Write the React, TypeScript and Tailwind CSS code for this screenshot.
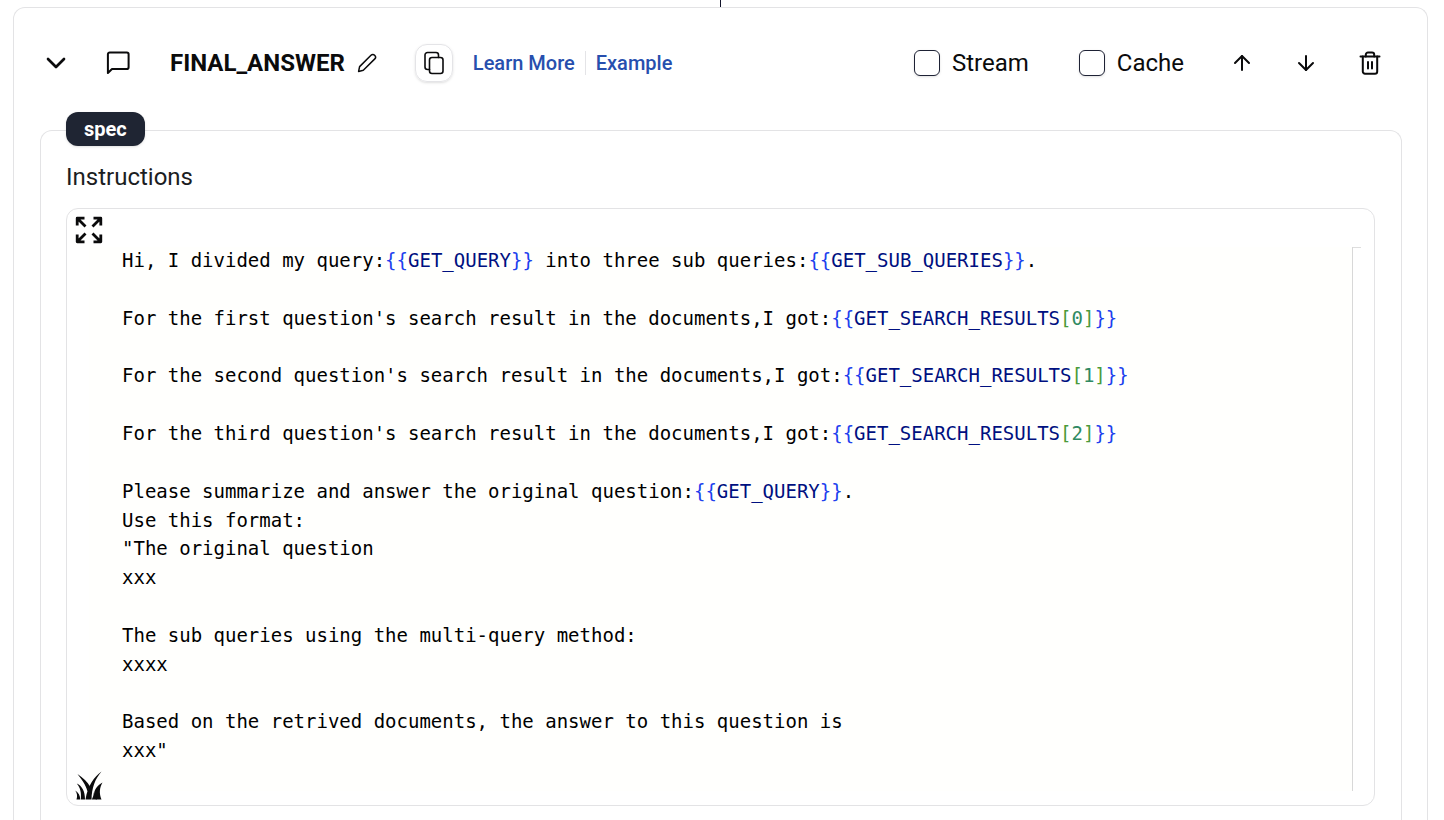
import React from "react";
import { ArrowDown, ArrowUp, ChevronDown } from "lucide-react";

type Token = { text: string; kind?: "brace" | "name" | "index" | "number" };

const ref = (name: string, index?: string): Token[] => [
  { text: "{{", kind: "brace" },
  { text: name, kind: "name" },
  ...(index === undefined
    ? []
    : ([
        { text: "[", kind: "index" },
        { text: index, kind: "number" },
        { text: "]", kind: "index" },
      ] as Token[])),
  { text: "}}", kind: "brace" },
];

const t = (text: string): Token => ({ text });

const lines: Token[][] = [
  [t("Hi, I divided my query:"), ...ref("GET_QUERY"), t(" into three sub queries:"), ...ref("GET_SUB_QUERIES"), t(".")],
  [],
  [t("For the first question's search result in the documents,I got:"), ...ref("GET_SEARCH_RESULTS", "0")],
  [],
  [t("For the second question's search result in the documents,I got:"), ...ref("GET_SEARCH_RESULTS", "1")],
  [],
  [t("For the third question's search result in the documents,I got:"), ...ref("GET_SEARCH_RESULTS", "2")],
  [],
  [t("Please summarize and answer the original question:"), ...ref("GET_QUERY"), t(".")],
  [t("Use this format:")],
  [t('"The original question')],
  [t("xxx")],
  [],
  [t("The sub queries using the multi-query method:")],
  [t("xxxx")],
  [],
  [t("Based on the retrived documents, the answer to this question is")],
  [t('xxx"')],
];

const tokenColor = {
  brace: "text-[#2040ee]",
  name: "text-[#001080]",
  index: "text-[#4a9a3a]",
  number: "text-[#2f8a62]",
};

function MessageIcon() {
  return (
    <svg viewBox="0 0 24 24" className="size-6" fill="none" stroke="currentColor" strokeWidth="2" strokeLinejoin="round" aria-hidden="true">
      <path d="M1.9 22V3.200A1.800 1.800 0 0 1 3.700 1.400H20.800A1.800 1.800 0 0 1 22.600 3.200V16.200A1.800 1.800 0 0 1 20.800 18H6Z" />
    </svg>
  );
}

function PencilIcon() {
  return (
    <svg viewBox="0 0 20 20" className="size-5" fill="none" stroke="currentColor" strokeWidth="1.5" strokeLinejoin="round" aria-hidden="true">
      <path d="M1.6 18.400 2.600 13.600 14 2.200C15 1.200 16.600 1.200 17.600 2.200 18.800 3.400 18.800 4.900 17.800 5.900L6.300 17.200Z" />
    </svg>
  );
}

function CopyIcon() {
  return (
    <svg viewBox="0 0 24 24" className="size-6" fill="none" stroke="currentColor" strokeWidth="1.6" strokeLinejoin="round" strokeLinecap="round" aria-hidden="true">
      <rect x="7.500" y="6.500" width="13.500" height="16" rx="2.500" />
      <path d="M7.500 18.500H5.500A2.500 2.500 0 0 1 3 16V4A2.500 2.500 0 0 1 5.500 1.500H14A2.500 2.500 0 0 1 16.500 4V6.500" />
    </svg>
  );
}

function TrashIcon() {
  return (
    <svg viewBox="0 0 24 26" className="h-6.5 w-6" fill="none" stroke="currentColor" strokeWidth="2" strokeLinecap="round" strokeLinejoin="round" aria-hidden="true">
      <path d="M2.500 6.500H21.500" />
      <path d="M7.800 6.500V4.700A2.200 2.200 0 0 1 10 2.500H14A2.200 2.200 0 0 1 16.200 4.700V6.500" />
      <path d="M4.800 6.500V21.500A2.200 2.200 0 0 0 7 23.700H17A2.200 2.200 0 0 0 19.200 21.500V6.500" />
      <path d="M10 12V18.500M14 12V18.500" />
    </svg>
  );
}

function ExpandIcon() {
  return (
    <svg viewBox="0 0 28 28" className="size-7" fill="none" stroke="currentColor" strokeWidth="2.8" strokeLinejoin="round" aria-hidden="true">
      <path d="M9.500 2.200H2.200V9.500M2.500 2.500 10.500 10.500" />
      <path d="M18.500 2.200H25.800V9.500M25.500 2.500 17.500 10.500" />
      <path d="M9.500 25.800H2.200V18.500M2.500 25.500 10.500 17.500" />
      <path d="M18.500 25.800H25.800V18.500M25.500 25.500 17.500 17.500" />
    </svg>
  );
}

function GrassIcon() {
  return (
    <svg viewBox="0 0 28 30" className="h-7.5 w-7" fill="currentColor" aria-hidden="true">
      <path d="M26.500 .5C19 6 13 14 10.500 28.500H16.500C16.800 17 20 8 26.500 .5Z" />
      <path d="M2.500 3C8 7 12.800 11 15 15.500L12.500 20.500C10.500 13 7 9 2.500 3Z" />
      <path d="M1.800 12.500C7 15 10 20 10 28.500H5.800C6.500 22 5.500 17 1.800 12.500Z" />
      <path d="M27.500 11.500C22 14.500 19 19 19.200 23L20.800 28.500H26.500C24 22 24.500 17 27.500 11.500Z" />
      <path d="M.2 19.500C3.500 21.500 5.200 24.500 5.200 28.500H1.500C2.600 25 2.200 22 .2 19.500Z" />
      <path d="M18.800 21.500C20.800 24 21.800 26 21.800 28.500H16.800C18 26 18.600 24.500 18.800 21.500Z" />
    </svg>
  );
}

function CheckField({ id, label }: { id: string; label: string }) {
  return (
    <label htmlFor={id} className="flex items-center gap-3">
      <input
        id={id}
        type="checkbox"
        className="size-[26px] appearance-none rounded-md border border-[#1e2235] bg-white shadow-sm checked:bg-[#1f2533]"
      />
      <span className="text-[24px] leading-8 font-normal">{label}</span>
    </label>
  );
}

export default function App() {
  return (
    <main className="min-h-screen bg-white pr-4 pl-[13px] font-['Roboto',sans-serif] text-[#0b0b0c]">
      <div className="mx-auto h-[7px] w-px bg-[#12142a]" />
      <section className="rounded-t-xl border border-b-0 border-[#e3e3e5] pr-[25px] pl-[26px]">
        <header className="flex h-[109px] items-center justify-between">
          <div className="flex items-center">
            <button type="button" aria-label="Collapse" className="flex size-8 items-center justify-center">
              <ChevronDown className="size-8" strokeWidth={2} />
            </button>
            <span className="ml-[34px] flex">
              <MessageIcon />
            </span>
            <h2 className="ml-10 text-[24px] leading-8 font-bold">FINAL_ANSWER</h2>
            <button type="button" aria-label="Rename" className="ml-3 flex">
              <PencilIcon />
            </button>
            <button
              type="button"
              aria-label="Copy"
              className="ml-[38px] flex size-[38px] items-center justify-center rounded-xl border border-[#e4e4e7] shadow-sm"
            >
              <CopyIcon />
            </button>
            <nav className="ml-5 flex items-center gap-2.5 text-[20px] leading-6 font-medium text-[#274fae]">
              <a href="#learn-more">Learn More</a>
              <span className="h-6 w-px bg-[#e4e4e7]" />
              <a href="#example">Example</a>
            </nav>
          </div>
          <div className="flex items-center pr-5">
            <CheckField id="stream" label="Stream" />
            <div className="ml-[50px]">
              <CheckField id="cache" label="Cache" />
            </div>
            <div className="ml-[46px] flex items-center gap-10">
              <button type="button" aria-label="Move up" className="flex">
                <ArrowUp className="size-6" strokeWidth={2} />
              </button>
              <button type="button" aria-label="Move down" className="flex">
                <ArrowDown className="size-6" strokeWidth={2} />
              </button>
              <button type="button" aria-label="Delete" className="flex">
                <TrashIcon />
              </button>
            </div>
          </div>
        </header>

        <div className="relative mt-[13px] rounded-t-xl border border-b-0 border-[#e3e3e5] pr-[26px] pl-[25px] pt-[30px] pb-8">
          <span className="absolute -top-[19px] left-[25px] flex h-[34px] items-center rounded-xl bg-[#1f2533] px-[18px] text-[20px] leading-6 font-bold text-white shadow-sm">
            spec
          </span>
          <h3 className="text-[24px] leading-8 font-normal text-[#1b1d22]">Instructions</h3>
          <div className="mt-[15px] rounded-xl border border-[#e3e3e5] px-2 pt-[7px] pb-1">
            <button type="button" aria-label="Expand editor" className="flex">
              <ExpandIcon />
            </button>
            <div className="mt-[3px] mr-[5px] flex">
              <pre className="ml-[14px] h-[544px] grow border-r border-[#d8d8d8] bg-[#fffffd] pl-[33px] font-['DejaVu_Sans_Mono',monospace] text-[19px] leading-[26px] text-black">
                <code className="grid h-[519px] auto-rows-fr font-['DejaVu_Sans_Mono',monospace]">
                  {lines.map((line, i) => (
                    <span key={i} className="block">
                      {line.map((token, j) => (
                        <span key={j} className={token.kind ? tokenColor[token.kind] : undefined}>
                          {token.text}
                        </span>
                      ))}
                    </span>
                  ))}
                </code>
              </pre>
              <span className="h-px w-2 bg-[#dedede]" />
            </div>
            <div className="-mt-5 flex">
              <GrassIcon />
            </div>
          </div>
        </div>
      </section>
    </main>
  );
}
